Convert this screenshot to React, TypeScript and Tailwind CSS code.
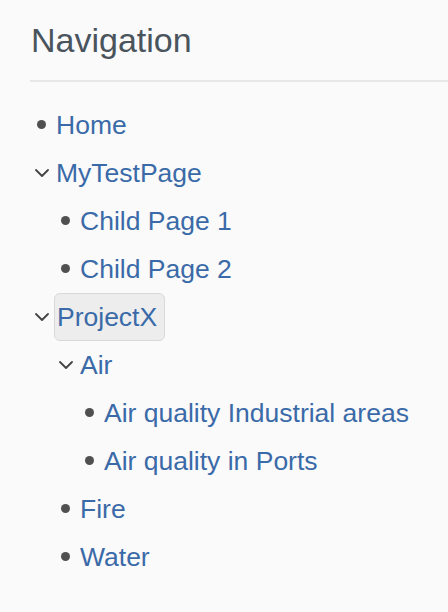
import { ReactNode } from "react";

type Node = {
  label: string;
  open?: boolean;
  active?: boolean;
  children?: Node[];
};

const tree: Node[] = [
  { label: "Home" },
  {
    label: "MyTestPage",
    open: true,
    children: [{ label: "Child Page 1" }, { label: "Child Page 2" }],
  },
  {
    label: "ProjectX",
    open: true,
    active: true,
    children: [
      {
        label: "Air",
        open: true,
        children: [
          { label: "Air quality Industrial areas" },
          { label: "Air quality in Ports" },
        ],
      },
      { label: "Fire" },
      { label: "Water" },
    ],
  },
];

function Chevron() {
  return (
    <svg width="14" height="8" viewBox="0 0 14 8" fill="none">
      <path
        d="M1 1l6 6 6-6"
        stroke="#444"
        strokeWidth="1.8"
        strokeLinecap="round"
        strokeLinejoin="round"
      />
    </svg>
  );
}

function Item({ node }: { node: Node }): ReactNode {
  return (
    <li>
      <div className="flex h-12 items-center">
        <span className="flex w-6 shrink-0 items-center justify-center">
          {node.children ? (
            <Chevron />
          ) : (
            <span className="block h-[9px] w-[9px] -translate-x-px -translate-y-px rounded-full bg-[#505050]" />
          )}
        </span>
        {node.active ? (
          <a className="flex h-12 items-center rounded-md border border-[#d9d9d9] bg-[#ededed] pl-[2px] pr-[7px] text-[#3a6aa8]">
            {node.label}
          </a>
        ) : (
          <a className="ml-[2px] text-[#3a6aa8]">{node.label}</a>
        )}
      </div>
      {node.children && node.open && (
        <ul className="pl-6">
          {node.children.map((c) => (
            <Item key={c.label} node={c} />
          ))}
        </ul>
      )}
    </li>
  );
}

export default function App() {
  return (
    <div
      className="min-h-[612px] bg-[#fafafa] pl-[30px] pt-[20px]"
      style={{ fontFamily: '"Liberation Sans", Arial, sans-serif' }}
    >
      <h2 className="pl-px text-[34px] leading-[40px] text-[#4a545d]">Navigation</h2>
      <div className="mt-[20px] h-[2px] bg-[#e8e8e8]" />
      <ul className="mt-[19px] text-[26.5px] leading-[48px]">
        {tree.map((n) => (
          <Item key={n.label} node={n} />
        ))}
      </ul>
    </div>
  );
}
